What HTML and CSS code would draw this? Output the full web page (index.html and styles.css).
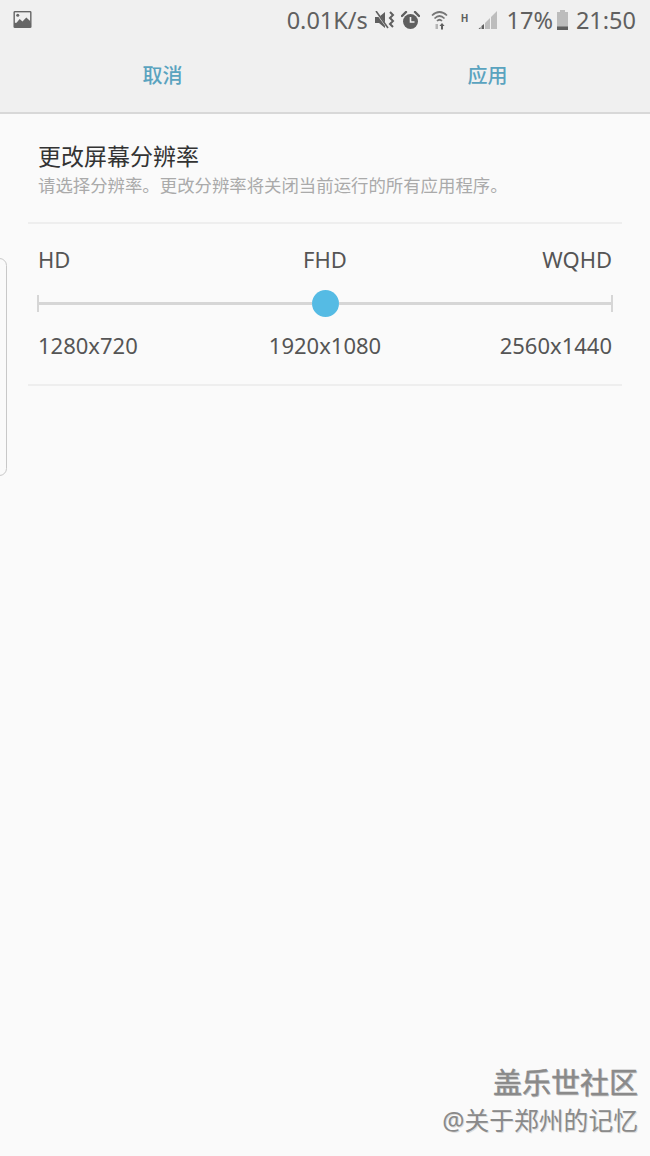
FILE: index.html
```html
<!doctype html>
<html lang="zh-CN">

<head>
    <meta charset="utf-8">
    <meta name="viewport" content="width=device-width, initial-scale=1.0">
    <title>更改屏幕分辨率</title>
    <link rel="stylesheet" href="styles.css">
</head>

<body>
    <header class="top">
        <div class="status-bar">
            <svg class="pic-icon" viewBox="0 0 20 19">
                <rect x="0.5" y="0.5" width="19" height="18" rx="1.5" fill="#666" />
                <rect x="2" y="2" width="16" height="11" fill="#f0f0f0" />
                <path d="M2 15 L7 9 L10 11.5 L14 7.5 L18 11 V16 H2 Z" fill="#666" />
                <circle cx="5" cy="5" r="1.6" fill="#666" />
            </svg>
            <div class="status-right">
                <span class="speed">0.01K/s</span>
                <svg class="mute-icon" viewBox="0 0 21 18">
                    <path d="M0 6 H4 L10 1 V17 L4 12 H0 Z" fill="#5f5f5f" />
                    <path d="M1 1 L12 16" stroke="#f0f0f0" stroke-width="2" />
                    <path d="M1 0 L13 17" stroke="#5f5f5f" stroke-width="1.6" />
                    <path d="M15 1 L18 4 L15 7 L18 10 L15 13 L18 16" fill="none" stroke="#5f5f5f" stroke-width="2" />
                </svg>
                <svg class="alarm-icon" viewBox="0 0 19 19">
                    <circle cx="9.5" cy="10.5" r="7.5" fill="#5f5f5f" />
                    <path d="M9.5 6 V11 H13.5" fill="none" stroke="#f0f0f0" stroke-width="1.6" />
                    <path d="M1 5 L5 1 M14 1 L18 5" stroke="#5f5f5f" stroke-width="2.4" stroke-linecap="round" />
                </svg>
                <svg class="wifi-icon" viewBox="0 0 17 20">
                    <path d="M1 5.5 Q8.5 -1.5 16 5.5" fill="none" stroke="#767676" stroke-width="1.7" />
                    <path d="M3.5 8.5 Q8.5 3.5 13.5 8.5" fill="none" stroke="#767676" stroke-width="1.7" />
                    <path d="M6 11 Q8.5 8.5 11 11" fill="none" stroke="#767676" stroke-width="1.7" />
                    <rect x="4.5" y="14" width="2.5" height="5" fill="#b5b5b5" />
                    <path d="M11 13 L13.6 16 H12 V19.5 H10 V16 H8.4 Z" fill="#5f5f5f" />
                </svg>
                <span class="net-type">H</span>
                <svg class="signal-icon" viewBox="0 0 20 20">
                    <path d="M20 1 V19 H14 V7 Z" fill="#bdbdbd" />
                    <path d="M13 8 V19 H8 V13 Z" fill="#bdbdbd" />
                    <path d="M7 14 V19 H4.5 V16 Z" fill="#5f5f5f" />
                    <path d="M3.5 17 V19 H1.5 Z" fill="#5f5f5f" />
                </svg>
                <span class="percent">17%</span>
                <svg class="battery-icon" viewBox="0 0 11 20">
                    <path d="M3 0 H8 V2 H11 V20 H0 V2 H3 Z" fill="#bcbcbc" />
                    <rect y="16.5" width="11" height="3.5" fill="#5f5f5f" />
                </svg>
                <span class="clock">21:50</span>
            </div>
        </div>
        <nav class="action-bar">
            <a class="action">取消</a>
            <a class="action">应用</a>
        </nav>
    </header>

    <main class="content">
        <section class="intro">
            <h1 class="title">更改屏幕分辨率</h1>
            <p class="desc">请选择分辨率。更改分辨率将关闭当前运行的所有应用程序。</p>
        </section>

        <section class="picker">
            <div class="row">
                <span>HD</span>
                <span>FHD</span>
                <span class="row-end">WQHD</span>
            </div>
            <div class="slider">
                <span class="tick"></span>
                <span class="track"></span>
                <span class="thumb"></span>
                <span class="track"></span>
                <span class="tick"></span>
            </div>
            <div class="row">
                <span>1280x720</span>
                <span>1920x1080</span>
                <span class="row-end">2560x1440</span>
            </div>
        </section>
    </main>

    <!-- edge panel handle -->
    <div class="edge-handle"></div>

    <div class="watermark">
        <div class="wm-name">盖乐世社区</div>
        <div class="wm-user">@关于郑州的记忆</div>
    </div>
</body>

</html>
```

FILE: styles.css
```css
/* base styles */

html,
body {
    margin: 0;
    height: 100%;
}

body {
    position: relative;
    overflow: hidden;
    background: #fafafa;
    font-family: "Noto Sans", "Noto Sans CJK SC", sans-serif;
    color: #555;
}

/* status bar & action bar */

.top {
    height: 112px;
    background: #f0f0f0;
    border-bottom: 2px solid #d8d8d8;
}

.status-bar {
    display: flex;
    align-items: center;
    justify-content: space-between;
    height: 40px;
    padding: 0 14px 0 13px;
    color: #606060;
    font-size: 23.5px;
}

.pic-icon {
    width: 19px;
    height: 19px;
    margin-bottom: 2px;
}

.status-right {
    display: flex;
    align-items: center;
}

.speed {
    margin-right: 7px;
}

.mute-icon {
    width: 21px;
    height: 18px;
    margin-right: 5px;
}

.alarm-icon {
    width: 19px;
    height: 19px;
    margin-right: 11px;
}

.wifi-icon {
    width: 17px;
    height: 20px;
    margin-right: 13px;
}

.net-type {
    align-self: flex-start;
    margin: 7px 8px 0 0;
    font-size: 10px;
    line-height: 14px;
    font-weight: 700;
}

.signal-icon {
    width: 20px;
    height: 20px;
    margin-right: 10px;
}

.percent {
    margin-right: 4px;
}

.battery-icon {
    width: 11px;
    height: 20px;
    margin-right: 8px;
}

.action-bar {
    display: grid;
    grid-template-columns: 1fr 1fr;
    height: 72px;
}

.action {
    text-align: center;
    padding-top: 22px;
    font-size: 20px;
    line-height: 28px;
    font-weight: 500;
    color: #5aa3bf;
}

/* content */

.content {
    padding: 0 28px;
}

.intro {
    height: 110px;
    box-sizing: border-box;
    padding: 27px 10px 0;
    border-bottom: 2px solid #eeeeee;
}

.title {
    margin: 0;
    font-size: 23px;
    line-height: 30px;
    font-weight: 400;
    color: #333;
}

.desc {
    margin: 1px 0 0;
    font-size: 17.4px;
    line-height: 26px;
    white-space: nowrap;
    color: #aaa;
}

.picker {
    height: 162px;
    box-sizing: border-box;
    padding: 19px 10px 0;
    border-bottom: 2px solid #eeeeee;
}

.row {
    display: grid;
    grid-template-columns: 1fr auto 1fr;
    font-size: 22px;
    line-height: 32px;
}

.row-end {
    justify-self: end;
}

.slider {
    display: flex;
    align-items: center;
    height: 26px;
    margin: 15px -1px 13px;
}

.tick {
    width: 2px;
    height: 17px;
    background: #d6d6d6;
}

.track {
    flex: 1;
    height: 3px;
    background: #d6d6d6;
}

.thumb {
    width: 27px;
    height: 27px;
    border-radius: 50%;
    background: #55bbe4;
}

/* overlays */

.edge-handle {
    position: absolute;
    left: -8px;
    top: 258px;
    width: 13px;
    height: 216px;
    border: 1px solid #c8c8c8;
    border-radius: 8px;
}

.watermark {
    position: absolute;
    right: 12px;
    bottom: 17px;
    text-align: right;
    color: #8a8a8a;
}

.wm-name {
    font-size: 29px;
    line-height: 36px;
    font-weight: 400;
    -webkit-text-stroke: 0.4px #8a8a8a;
    text-shadow: 1px 1px 0 #c4c4c4;
}

.wm-user {
    font-size: 24.8px;
    line-height: 38px;
    text-shadow: 1px 1px 0 #ddd;
}
```
